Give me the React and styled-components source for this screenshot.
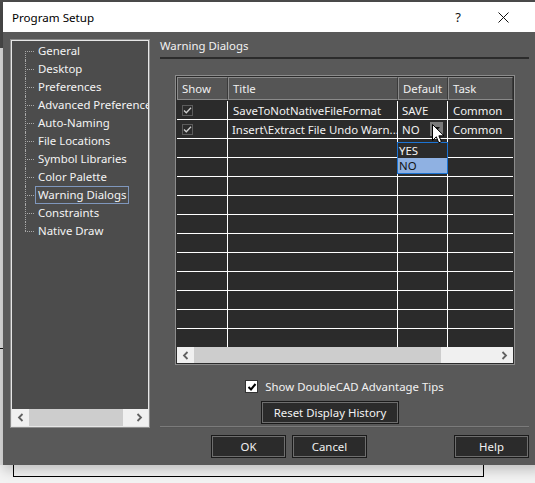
import React from 'react';
import styled, { createGlobalStyle } from 'styled-components';

const Global = createGlobalStyle`
  html, body { margin: 0; padding: 0; }
  body {
    width: 535px; height: 483px; overflow: hidden;
    background: #f3f3f3;
    font-family: "Noto Sans", "Segoe UI", sans-serif;
    font-size: 11.4px;
  }
  * { box-sizing: border-box; }
`;

const Page = styled.div`
  width: 535px; height: 483px; overflow: hidden;
  display: flex; flex-direction: column;
  background: #f3f3f3;
`;

const TopStrip = styled.div`
  height: 2px; flex: none; background: #4d4d4d;
`;

const MainRow = styled.div`
  display: flex; flex: none;
`;

const LeftStrip = styled.div`
  width: 3px; flex: none;
  background: linear-gradient(to bottom, #4a4a4a 0 46px, #dedede 46px 346px, #111 346px 347px, #dedede 347px);
`;

const Dialog = styled.div`
  width: 540px; flex: none;
  display: flex; flex-direction: column;
  box-shadow: 0 5px 12px rgba(0,0,0,0.22);
`;

const TitleBar = styled.div`
  height: 30px; background: #ffffff;
  display: flex; align-items: center;
  padding-left: 9px;
  color: #000; font-size: 11.6px;
`;

const TitleText = styled.span`
  flex: 1;
`;

const TitleButton = styled.span`
  width: ${p => p.$w || 46}px; height: 30px;
  display: flex; align-items: center; justify-content: center;
  font-size: 13px; color: #111;
`;

const TitleTail = styled.span`
  width: 18px;
`;

const Body = styled.div`
  background: #595959;
  padding: 7px 0 7px 7px;
  display: grid;
  grid-template-columns: 140px 369px;
  grid-template-rows: 389px 23px;
  column-gap: 10px;
  row-gap: 7px;
  color: #f2f2f2;
`;

const TreePanel = styled.div`
  border: 1px solid #8c8c8c;
  box-shadow: inset 0 0 0 1px #e6e6e6;
  background: #4c4c4c;
  padding: 1px;
  display: flex; flex-direction: column;
  overflow: hidden;
`;

const TreeList = styled.ul`
  list-style: none; margin: 0; padding: 1px 0 0 13px;
  flex: 1; overflow: hidden;
`;

const TreeItem = styled.li`
  position: relative;
  height: 18px;
  display: flex; align-items: center;
  padding-left: 10px;
  white-space: nowrap;
  &::before {
    content: ''; position: absolute; left: 0; top: 9px; width: 9px;
    border-top: 1px dotted #a8a8a8;
  }
  &::after {
    content: ''; position: absolute; left: 0; top: 0; bottom: 0;
    border-left: 1px dotted #a8a8a8;
  }
  &:first-child::after { top: 9px; }
  &:last-child::after { bottom: 9px; }
`;

const TreeLabel = styled.span`
  height: 18px; line-height: 16px;
  padding: 0 2px;
  border: 1px solid ${p => (p.$selected ? '#7f97bd' : 'transparent')};
  color: #f4f4f4;
`;

const HScroll = styled.div`
  height: 17px; flex: none;
  background: #f0f0f0;
  display: grid;
  grid-template-columns: 17px 1fr 17px;
  align-items: center;
`;

const ScrollArrow = styled.span`
  display: flex; align-items: center; justify-content: center;
  height: 100%;
`;

const ScrollTrack = styled.div`
  height: 100%;
  display: flex; align-items: center;
`;

const ScrollThumb = styled.div`
  height: 100%;
  background: #cdcdcd;
  width: ${p => p.$w};
`;

const RightCol = styled.div`
  display: flex; flex-direction: column;
  min-width: 0;
`;

const SectionTitle = styled.div`
  height: 14px; line-height: 14px;
  color: #f2f2f2;
`;

const Rule = styled.div`
  margin-top: 4px;
  height: 2px; background: #2b2b2b;
`;

const Table = styled.div`
  margin: 16px 0 0 15px;
  width: 340px; height: 290px;
  border: 1px solid #8c8c8c;
  padding: 1px;
  background: #2b2b2b;
  display: flex; flex-direction: column;
  position: relative;
`;

const cols = '51px 170px 50px 1fr';

const HeaderRow = styled.div`
  display: grid; grid-template-columns: ${cols};
  height: 24px; flex: none;
  border-bottom: 1px solid #2b2b2b;
`;

const HeaderCell = styled.div`
  background: #555555;
  border: 1px solid #8a8a8a;
  border-right-color: #3a3a3a;
  display: flex; align-items: center;
  padding-left: 4px;
  color: #f0f0f0;
`;

const Rows = styled.div`
  flex: 1; overflow: hidden;
`;

const Row = styled.div`
  display: grid; grid-template-columns: ${cols};
  height: 19px;
  border-bottom: 1px solid #ffffff;
`;

const Cell = styled.div`
  position: relative;
  border-right: ${p => (p.$last ? 'none' : '1px solid #ffffff')};
  display: flex; align-items: center;
  padding-left: ${p => p.$pad || 5}px;
  white-space: nowrap;
  overflow: ${p => (p.$open ? 'visible' : 'hidden')};
  color: #f2f2f2;
`;

const DropBtn = styled.span`
  margin-left: auto; margin-right: 4px;
  width: 13px; height: 14px;
  background: #7b7b7b;
  display: flex; align-items: center; justify-content: center;
`;

const DropList = styled.div`
  position: absolute; left: -1px; top: 22px; z-index: 3;
  width: 51px;
  border: 1px solid #1c74d4;
  background: #2b2b2b;
`;

const DropItem = styled.div`
  height: 15px; line-height: 15px;
  padding-left: 1px;
  background: ${p => (p.$selected ? '#8fb1e2' : '#2b2b2b')};
  color: ${p => (p.$selected ? '#111' : '#f4f4f4')};
`;

const Cursor = styled.svg`
  position: absolute; left: 34px; top: 4px; z-index: 4;
`;

const TableScroll = styled.div`
  height: 16px; flex: none;
  background: #f0f0f0;
  display: grid;
  grid-template-columns: 17px 1fr 17px;
`;

const CheckRow = styled.label`
  margin-top: 15px;
  display: flex; align-items: center; justify-content: center;
  gap: 7px;
  height: 13px;
  color: #f2f2f2;
`;

const CheckBox = styled.span`
  width: 13px; height: 13px;
  background: #ffffff;
  border: 1px solid #333;
  display: flex; align-items: center; justify-content: center;
`;

const Button = styled.button`
  height: 23px;
  width: ${p => p.$w || 75}px;
  background: #2b2b2b;
  color: #f2f2f2;
  font: inherit;
  border: 1px solid #1a1a1a;
  box-shadow: inset 0 0 0 1px #6e6e6e;
  padding: 0;
`;

const ResetButton = styled(Button)`
  margin: 8px 0 0 101px;
`;

const Separator = styled.div`
  margin-top: auto;
  height: 2px;
  border-top: 1px solid #7b7b7b;
  border-bottom: 1px solid #555;
`;

const Footer = styled.div`
  grid-column: 1 / -1;
  display: flex; gap: 6px;
  padding-left: 201px;
`;

const HelpButton = styled(Button)`
  margin-left: auto;
`;

const Backdrop = styled.div`
  flex: 1;
  padding-left: 13px;
`;

const Bracket = styled.div`
  width: 471px; height: 12px;
  border: 1.5px solid #000;
  border-top: none;
`;

const Chevron = ({ dir, color = '#606060' }) => (
  <svg width="7" height="9" viewBox="0 0 7 9">
    <path
      d={dir === 'left' ? 'M5.5 1 L2 4.5 L5.5 8' : 'M1.5 1 L5 4.5 L1.5 8'}
      fill="none" stroke={color} strokeWidth="1.8"
    />
  </svg>
);

const GridCheck = () => (
  <svg width="11" height="11" viewBox="0 0 11 11">
    <rect x="0.5" y="0.5" width="10" height="10" fill="none" stroke="#5c5c5c" />
    <path d="M2 5.5 L4.3 7.8 L9 2.8" fill="none" stroke="#cfcfcf" strokeWidth="1.3" />
  </svg>
);

const treeItems = [
  'General', 'Desktop', 'Preferences', 'Advanced Preferences', 'Auto-Naming',
  'File Locations', 'Symbol Libraries', 'Color Palette', 'Warning Dialogs',
  'Constraints', 'Native Draw',
];

export default function App() {
  const empty = Array.from({ length: 11 });
  return (
    <Page>
      <Global />
      <TopStrip />
      <MainRow>
        <LeftStrip />
        <Dialog>
          <TitleBar>
            <TitleText>Program Setup</TitleText>
            <TitleButton $w={46}>?</TitleButton>
            <TitleButton $w={44}>
              <svg width="11" height="11" viewBox="0 0 11 11">
                <path d="M0.5 0.5 L10.5 10.5 M10.5 0.5 L0.5 10.5" stroke="#111" strokeWidth="1" />
              </svg>
            </TitleButton>
            <TitleTail />
          </TitleBar>
          <Body>
            <TreePanel>
              <TreeList>
                {treeItems.map(t => (
                  <TreeItem key={t}>
                    <TreeLabel $selected={t === 'Warning Dialogs'}>{t}</TreeLabel>
                  </TreeItem>
                ))}
              </TreeList>
              <HScroll>
                <ScrollArrow><Chevron dir="left" /></ScrollArrow>
                <ScrollTrack><ScrollThumb $w="94px" /></ScrollTrack>
                <ScrollArrow><Chevron dir="right" /></ScrollArrow>
              </HScroll>
            </TreePanel>
            <RightCol>
              <SectionTitle>Warning Dialogs</SectionTitle>
              <Rule />
              <Table>
                <HeaderRow>
                  <HeaderCell>Show</HeaderCell>
                  <HeaderCell>Title</HeaderCell>
                  <HeaderCell>Default</HeaderCell>
                  <HeaderCell>Task</HeaderCell>
                </HeaderRow>
                <Rows>
                  <Row>
                    <Cell><GridCheck /></Cell>
                    <Cell>SaveToNotNativeFileFormat</Cell>
                    <Cell $pad={4}>SAVE</Cell>
                    <Cell $last>Common</Cell>
                  </Row>
                  <Row>
                    <Cell><GridCheck /></Cell>
                    <Cell $pad={4}>Insert\Extract File Undo Warn...</Cell>
                    <Cell $pad={4} $open>
                      NO
                      <DropBtn>
                        <svg width="7" height="4" viewBox="0 0 7 4"><path d="M0 0 L7 0 L3.5 4 Z" fill="#111" /></svg>
                      </DropBtn>
                      <DropList>
                        <DropItem>YES</DropItem>
                        <DropItem $selected>NO</DropItem>
                      </DropList>
                      <Cursor width="13" height="21" viewBox="0 0 13 21">
                        <path d="M0.5 0.5 L0.5 16.5 L4.3 12.8 L6.8 18.8 L9.4 17.7 L6.9 11.8 L12 11.8 Z" fill="#fff" stroke="#000" strokeWidth="1" strokeLinejoin="round" />
                      </Cursor>
                    </Cell>
                    <Cell $last>Common</Cell>
                  </Row>
                  {empty.map((_, i) => (
                    <Row key={i}>
                      <Cell /><Cell /><Cell /><Cell $last />
                    </Row>
                  ))}
                </Rows>
                <TableScroll>
                  <ScrollArrow><Chevron dir="left" /></ScrollArrow>
                  <ScrollTrack><ScrollThumb $w="247px" /></ScrollTrack>
                  <ScrollArrow><Chevron dir="right" /></ScrollArrow>
                </TableScroll>
              </Table>
              <CheckRow>
                <CheckBox>
                  <svg width="10" height="10" viewBox="0 0 10 10">
                    <path d="M1.5 5 L4 7.5 L8.5 2" fill="none" stroke="#000" strokeWidth="2" />
                  </svg>
                </CheckBox>
                Show DoubleCAD Advantage Tips
              </CheckRow>
              <ResetButton $w={138}>Reset Display History</ResetButton>
              <Separator />
            </RightCol>
            <Footer>
              <Button>OK</Button>
              <Button>Cancel</Button>
              <HelpButton>Help</HelpButton>
            </Footer>
          </Body>
        </Dialog>
      </MainRow>
      <Backdrop>
        <Bracket />
      </Backdrop>
    </Page>
  );
}
